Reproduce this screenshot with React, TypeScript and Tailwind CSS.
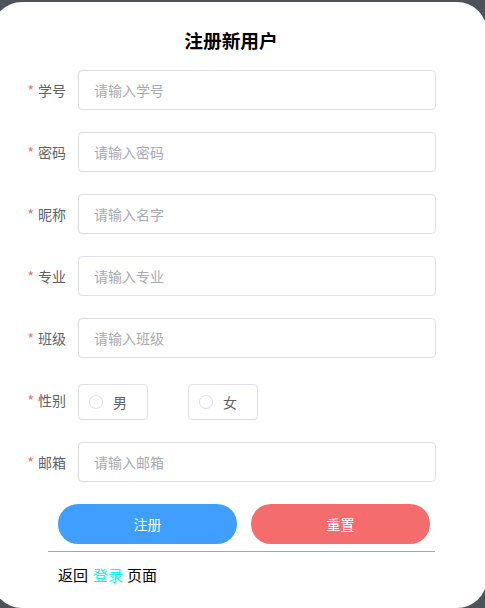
import React from "react";

const font = { fontFamily: '"Noto Sans CJK SC", "Noto Sans", sans-serif' };

function Row({ label, children }: { label: string; children: React.ReactNode }) {
  return (
    <div className="flex h-[40px] mb-[22px]">
      <div className="w-[60px] shrink-0 flex items-center justify-end pr-[12px] text-[14px] text-[#606266] leading-[40px] -mt-[1px]">
        <span className="text-[#f56c6c] mr-[4px]">*</span>
        <span>{label}</span>
      </div>
      {children}
    </div>
  );
}

function Input({ placeholder }: { placeholder: string }) {
  return (
    <div className="flex-1 h-[40px] border border-[#dcdfe6] rounded-[4px] flex items-center pl-[15px] text-[14px] text-[#a8abb2] bg-white">
      {placeholder}
    </div>
  );
}

function Radio({ text }: { text: string }) {
  return (
    <div className="w-[70px] h-[36px] mt-[4px] border border-[#dcdfe6] rounded-[4px] flex items-center pl-[10px] text-[14px] text-[#606266]">
      <span className="w-[14px] h-[14px] rounded-full border border-[#dcdfe6] bg-white shrink-0" />
      <span className="ml-[10px]">{text}</span>
    </div>
  );
}

export default function App() {
  return (
    <div className="w-[485px] h-[608px] overflow-hidden bg-[#4d5359] relative" style={font}>
      <div className="mt-[2px] ml-[-8px] w-[495px] h-[606px] rounded-[30px] bg-white">
        <div className="ml-[26px] w-[426px] pt-[25px]">
          <h3 className="text-center text-[18.72px] font-bold leading-[26px] text-black">注册新用户</h3>
          <div className="mt-[17px] w-[418px]">
            <Row label="学号"><Input placeholder="请输入学号" /></Row>
            <Row label="密码"><Input placeholder="请输入密码" /></Row>
            <Row label="昵称"><Input placeholder="请输入名字" /></Row>
            <Row label="专业"><Input placeholder="请输入专业" /></Row>
            <Row label="班级"><Input placeholder="请输入班级" /></Row>
            <Row label="性别">
              <div className="flex gap-[40px]">
                <Radio text="男" />
                <Radio text="女" />
              </div>
            </Row>
            <Row label="邮箱"><Input placeholder="请输入邮箱" /></Row>
          </div>
          <div className="flex gap-[14px] ml-[40px]">
            <div className="w-[179px] h-[40px] rounded-full bg-[#409eff] text-white text-[14px] flex items-center justify-center">注册</div>
            <div className="w-[179px] h-[40px] rounded-full bg-[#f56c6c] text-white text-[14px] flex items-center justify-center">重置</div>
          </div>
          <div className="ml-[30px] w-[387px] mt-[7px] h-[1px] bg-[#a6a6a6]" />
          <div className="ml-[40px] mt-[12px] text-[15px] leading-[22px] text-black flex">
            <span>返回</span>
            <span className="text-[#00ffff] ml-[5px] mr-[4px]">登录</span>
            <span>页面</span>
          </div>
        </div>
      </div>
    </div>
  );
}
